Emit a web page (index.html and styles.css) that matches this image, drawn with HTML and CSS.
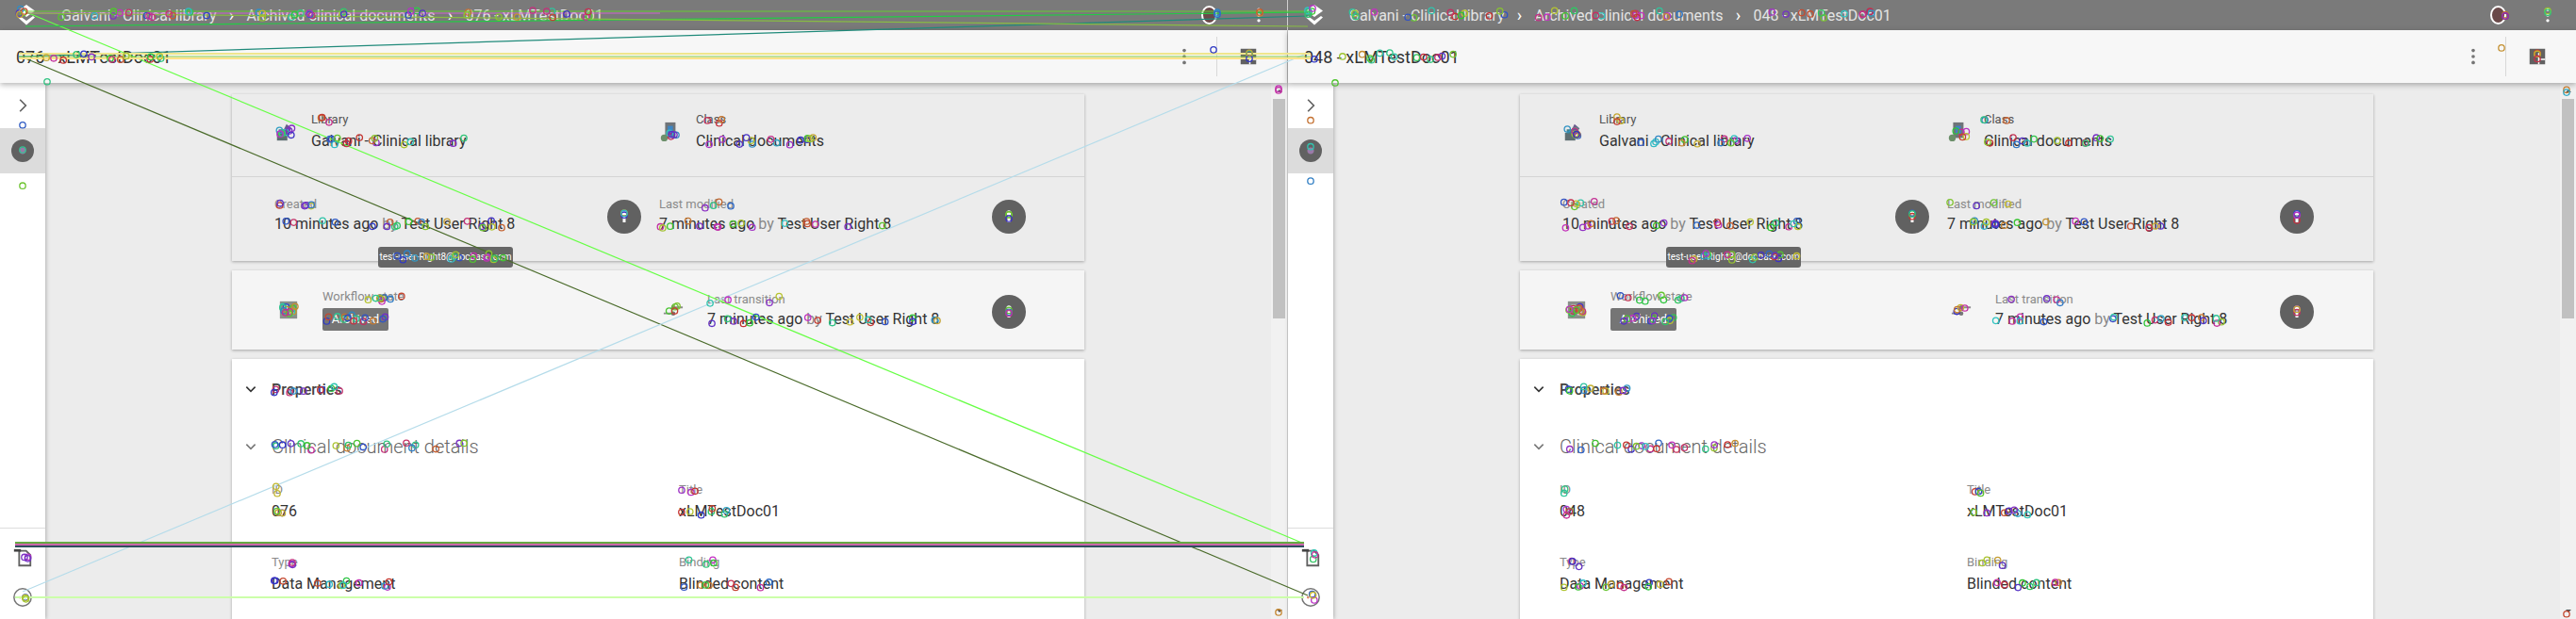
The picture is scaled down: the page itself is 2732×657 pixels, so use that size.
FILE: index.html
```html
<!DOCTYPE html>
<html lang="en">
<head>
  <meta charset="UTF-8" />
  <title>Galvani - Clinical library</title>
  <link rel="stylesheet" href="styles.css">
</head>
<body>
  <svg class="defs" width="0" height="0">
    <symbol id="i-logo" viewBox="0 0 24 24"><path d="M12 1l9 6.5-9 6.5-9-6.5z" fill="#fff"/><path d="M5 13l7 5 7-5 2 1.5-9 8-9-8z" fill="#fff"/></symbol>
    <symbol id="i-dots" viewBox="0 0 24 24"><circle cx="12" cy="5" r="2"/><circle cx="12" cy="12" r="2"/><circle cx="12" cy="19" r="2"/></symbol>
    <symbol id="i-table" viewBox="0 0 24 24"><path d="M1 1h22v22H1z" fill="#616161"/><path d="M13 7h2v8h8v2h-8v6h-2z" fill="#fff"/></symbol>
    <symbol id="i-person" viewBox="0 0 24 24"><circle cx="12" cy="6.5" r="3.5" fill="#fff"/><path d="M10 11h4v9h-4z" fill="#fff"/></symbol>
    <symbol id="i-library" viewBox="0 0 24 24"><path d="M3 13h12v9H3z" fill="#5d6d72"/><path d="M5 9h10v5H5z" fill="#3f7f8c"/><path d="M14 3l6 5-6 7-4-4z" fill="#6b5a8e"/></symbol>
    <symbol id="i-class" viewBox="0 0 24 24"><path d="M7 1h12v18H7z" fill="#6f7478"/><path d="M10 5h6v9h-6z" fill="#3d86c6"/><circle cx="6" cy="19" r="4" fill="#6c8f6a"/></symbol>
    <symbol id="i-state" viewBox="0 0 24 24"><path d="M2 2h20v20H2z" fill="#8a8f8a"/><path d="M6 6h5v5H6zM13 13h5v5h-5z" fill="#d8d8d8"/></symbol>
    <symbol id="i-move" viewBox="0 0 24 24"><path d="M12 8h11v2H12zM1 15h11v2H1z" fill="#8c8c8c"/><circle cx="12" cy="9" r="2.5" fill="#777"/><circle cx="12" cy="16" r="2.5" fill="#777"/></symbol>
    <symbol id="i-doc" viewBox="0 0 24 24"><path d="M8 4h8l5 5v12H8z" fill="none" stroke="#616161" stroke-width="2"/><path d="M2 2h8v3H2z" fill="#444"/></symbol>
    <symbol id="i-help" viewBox="0 0 24 24"><circle cx="12" cy="12" r="10" fill="none" stroke="#757575" stroke-width="1.6"/><circle cx="9" cy="12" r="1.5" fill="#e08a6a"/><circle cx="15" cy="12" r="1.5" fill="#9ac46a"/></symbol>
    <symbol id="i-chev-r" viewBox="0 0 24 24"><path d="M8.6 4.5L16 12l-7.4 7.5" fill="none" stroke="#616161" stroke-width="2"/></symbol>
    <symbol id="i-chev-d" viewBox="0 0 24 24"><path d="M5 8.5l7 7 7-7" fill="none" stroke="currentColor" stroke-width="2.4"/></symbol>
  </svg>

  <div class="screen">
    <section class="pane">
      <div class="topbar">
        <svg class="logo"><use href="#i-logo"/></svg>
        <nav class="crumbs">
          <span>Galvani - Clinical library</span><i>&#x203A;</i>
          <span>Archived clinical documents</span><i>&#x203A;</i>
          <span>076 - xLMTestDoc01</span>
        </nav>
        <span class="avatar-top"></span>
        <svg class="top-dots"><use href="#i-dots"/></svg>
      </div>
      <div class="subbar">
        <h1>076 - xLMTestDoc01</h1>
        <svg class="sub-dots"><use href="#i-dots"/></svg>
        <span class="sub-sep"></span>
        <svg class="sub-table"><use href="#i-table"/></svg>
      </div>
      <div class="main">
        <aside class="rail">
          <div class="rail-btn"><svg class="rail-chev"><use href="#i-chev-r"/></svg></div>
          <div class="rail-btn active"><span class="info-dot"></span></div>
          <div class="rail-bottom">
            <svg class="rail-ico"><use href="#i-doc"/></svg>
            <svg class="rail-ico"><use href="#i-help"/></svg>
          </div>
        </aside>
        <div class="content">
          <div class="card meta">
            <div class="row row-top">
              <div class="cell"><svg class="ico"><use href="#i-library"/></svg><div><div class="lbl dark">Library</div><div class="val">Galvani - Clinical library</div></div></div>
              <div class="cell"><svg class="ico"><use href="#i-class"/></svg><div><div class="lbl dark">Class</div><div class="val">Clinical documents</div></div></div>
            </div>
            <div class="row row-dates">
              <div class="cell"><div class="grow"><div class="lbl">Created</div><div class="val tight">10 minutes ago <em>by</em> Test User Right 8</div></div><span class="user"><svg><use href="#i-person"/></svg></span></div>
              <div class="cell"><div class="grow"><div class="lbl">Last modified</div><div class="val tight">7 minutes ago <em>by</em> Test User Right 8</div></div><span class="user"><svg><use href="#i-person"/></svg></span></div>
            </div>
            <div class="tooltip">test-user-Right8@docbase.com</div>
          </div>
          <div class="card row row-flow">
            <div class="cell"><svg class="ico wide"><use href="#i-state"/></svg><div><div class="lbl">Workflow state</div><div class="chip">Archived</div></div></div>
            <div class="cell"><svg class="ico wide"><use href="#i-move"/></svg><div class="grow"><div class="lbl">Last transition</div><div class="val tight">7 minutes ago <em>by</em> Test User Right 8</div></div><span class="user"><svg><use href="#i-person"/></svg></span></div>
          </div>
          <div class="card props">
            <div class="prop-head"><svg class="chev"><use href="#i-chev-d"/></svg><h2>Properties</h2></div>
            <div class="prop-sub"><svg class="chev soft"><use href="#i-chev-d"/></svg><h3>Clinical document details</h3></div>
            <div class="fields">
              <div><div class="lbl">ID</div><div class="val big">076</div></div>
              <div><div class="lbl">Title</div><div class="val big">xLMTestDoc01</div></div>
              <div><div class="lbl">Type</div><div class="val big">Data Management</div></div>
              <div><div class="lbl">Binding</div><div class="val big">Blinded content</div></div>
            </div>
          </div>
        </div>
        <div class="scroll"><span class="arrow up"></span><span class="thumb"></span><span class="arrow down"></span></div>
      </div>
    </section>

    <section class="pane">
      <div class="topbar">
        <svg class="logo"><use href="#i-logo"/></svg>
        <nav class="crumbs">
          <span>Galvani - Clinical library</span><i>&#x203A;</i>
          <span>Archived clinical documents</span><i>&#x203A;</i>
          <span>048 - xLMTestDoc01</span>
        </nav>
        <span class="avatar-top"></span>
        <svg class="top-dots"><use href="#i-dots"/></svg>
      </div>
      <div class="subbar">
        <h1>048 - xLMTestDoc01</h1>
        <svg class="sub-dots"><use href="#i-dots"/></svg>
        <span class="sub-sep"></span>
        <svg class="sub-table"><use href="#i-table"/></svg>
      </div>
      <div class="main">
        <aside class="rail">
          <div class="rail-btn"><svg class="rail-chev"><use href="#i-chev-r"/></svg></div>
          <div class="rail-btn active"><span class="info-dot"></span></div>
          <div class="rail-bottom">
            <svg class="rail-ico"><use href="#i-doc"/></svg>
            <svg class="rail-ico"><use href="#i-help"/></svg>
          </div>
        </aside>
        <div class="content">
          <div class="card meta">
            <div class="row row-top">
              <div class="cell"><svg class="ico"><use href="#i-library"/></svg><div><div class="lbl dark">Library</div><div class="val">Galvani - Clinical library</div></div></div>
              <div class="cell"><svg class="ico"><use href="#i-class"/></svg><div><div class="lbl dark">Class</div><div class="val">Clinical documents</div></div></div>
            </div>
            <div class="row row-dates">
              <div class="cell"><div class="grow"><div class="lbl">Created</div><div class="val tight">10 minutes ago <em>by</em> Test User Right 8</div></div><span class="user"><svg><use href="#i-person"/></svg></span></div>
              <div class="cell"><div class="grow"><div class="lbl">Last modified</div><div class="val tight">7 minutes ago <em>by</em> Test User Right 8</div></div><span class="user"><svg><use href="#i-person"/></svg></span></div>
            </div>
            <div class="tooltip">test-user-Right8@docbase.com</div>
          </div>
          <div class="card row row-flow">
            <div class="cell"><svg class="ico wide"><use href="#i-state"/></svg><div><div class="lbl">Workflow state</div><div class="chip">Archived</div></div></div>
            <div class="cell"><svg class="ico wide"><use href="#i-move"/></svg><div class="grow"><div class="lbl">Last transition</div><div class="val tight">7 minutes ago <em>by</em> Test User Right 8</div></div><span class="user"><svg><use href="#i-person"/></svg></span></div>
          </div>
          <div class="card props">
            <div class="prop-head"><svg class="chev"><use href="#i-chev-d"/></svg><h2>Properties</h2></div>
            <div class="prop-sub"><svg class="chev soft"><use href="#i-chev-d"/></svg><h3>Clinical document details</h3></div>
            <div class="fields">
              <div><div class="lbl">ID</div><div class="val big">048</div></div>
              <div><div class="lbl">Title</div><div class="val big">xLMTestDoc01</div></div>
              <div><div class="lbl">Type</div><div class="val big">Data Management</div></div>
              <div><div class="lbl">Binding</div><div class="val big">Blinded content</div></div>
            </div>
          </div>
        </div>
        <div class="scroll"><span class="arrow up"></span><span class="thumb"></span><span class="arrow down"></span></div>
      </div>
    </section>

    <!-- match lines and keypoints drawn over both panes -->
    <svg class="matches" viewBox="0 0 2732 657" width="2732" height="657">
      <g class="lines">
        <path d="M28 13L1383 577" stroke="#66ff44"/>
        <path d="M27 62L1387 632" stroke="#4a6b2a"/>
        <path d="M24 628L1383 58" stroke="#b5dcea"/>
        <path d="M20 60L1387 17" stroke="#1f8a7a"/>
        <path d="M28 12H1387" stroke="#66cc33"/>
        <path d="M28 14H700" stroke="#cc66cc"/>
        <path d="M27 28L1387 13" stroke="#22cc44"/>
        <path d="M28 14L1387 28" stroke="#88bb44"/>
        <path class="thick" d="M20 57H1390" stroke="#f0e68c"/>
        <path class="thick" d="M20 62H1390" stroke="#ffe38a"/>
        <path d="M20 60H1390" stroke="#88cc44"/>
        <path class="thick" d="M16 576H1383" stroke="#66aa44"/>
        <path class="thick" d="M16 578H1383" stroke="#cc66aa"/>
        <path class="thick" d="M16 580H1383" stroke="#2f4f5f"/>
        <path class="thick" d="M16 634H1383" stroke="#ccffaa"/>
      </g>
      <g class="points"></g>
    </svg>
  </div>
  <script src="matches.js"></script>
</body>
</html>
```

FILE: styles.css
```css
html, body {
  margin: 0;
  height: 100%;
  overflow: hidden;
}

body {
  font-family: Roboto, "Liberation Sans", sans-serif;
  color: #333;
  background-color: #ececec;
}

.defs {
  position: absolute;
}

.screen {
  position: relative;
  display: flex;
  width: 2732px;
  height: 657px;
  overflow: hidden;
}

.pane {
  display: flex;
  flex-direction: column;
  width: 1366px;
  height: 657px;
  flex: none;
  box-sizing: border-box;
}

.pane:first-child {
  border-right: 1px solid #d0d0d0;
}

/* top bar */
.topbar {
  display: flex;
  align-items: center;
  flex: none;
  height: 32px;
  background-color: #7a7a7a;
}

.logo {
  width: 24px;
  height: 24px;
  margin-left: 16px;
  fill: #fff;
}

.crumbs {
  display: flex;
  align-items: center;
  flex: 1;
  margin-left: 25px;
  font-size: 16px;
  color: #e4e4e4;
}

.crumbs i {
  width: 32px;
  font-style: normal;
  font-size: 18px;
  color: #fff;
  text-align: center;
  line-height: 20px;
}

.avatar-top {
  width: 17px;
  height: 20px;
  border: 2px solid #fff;
  border-radius: 50%;
  background-color: #6a4a4a;
  box-sizing: border-box;
  margin-right: 34px;
}

.top-dots {
  width: 20px;
  height: 20px;
  fill: #fff;
  margin-right: 20px;
}

/* title bar */
.subbar {
  position: relative;
  z-index: 2;
  display: flex;
  align-items: center;
  flex: none;
  height: 56px;
  padding-left: 17px;
  background-color: #f7f7f7;
  box-shadow: 0 2px 6px rgba(0, 0, 0, .3);
}

.subbar h1 {
  flex: 1;
  margin: 0;
  font-size: 18px;
  font-weight: 400;
  color: #333;
}

.sub-dots {
  width: 22px;
  height: 22px;
  fill: #757575;
  margin-right: 23px;
}

.sub-sep {
  width: 1px;
  height: 42px;
  background-color: #d8d8d8;
  margin-right: 24px;
}

.sub-table {
  width: 18px;
  height: 18px;
  margin-right: 32px;
}

/* main area */
.main {
  display: flex;
  flex: 1;
  min-height: 0;
}

.rail {
  position: relative;
  z-index: 1;
  display: flex;
  flex-direction: column;
  flex: none;
  width: 48px;
  background-color: #fff;
  box-shadow: 1px 0 4px rgba(0, 0, 0, .25);
}

.rail-btn {
  display: flex;
  align-items: center;
  justify-content: center;
  flex: none;
  height: 48px;
}

.rail-btn.active {
  background-color: #dcdcdc;
}

.rail-chev {
  width: 20px;
  height: 20px;
}

.info-dot {
  width: 24px;
  height: 24px;
  border-radius: 50%;
  background: radial-gradient(circle, #9a7aa8 0 3px, #616161 4px);
}

.rail-bottom {
  display: flex;
  flex-direction: column;
  align-items: center;
  gap: 20px;
  margin-top: auto;
  height: 97px;
  padding-top: 20px;
  box-sizing: border-box;
  border-top: 1px solid #ddd;
}

.rail-ico {
  width: 22px;
  height: 22px;
}

.content {
  flex: 1;
  min-width: 0;
  padding: 12px 198px 0;
  background-color: #ececec;
  overflow: hidden;
}

.scroll {
  display: flex;
  flex-direction: column;
  align-items: center;
  flex: none;
  width: 17px;
  background-color: #f1f1f1;
}

.thumb {
  width: 13px;
  height: 233px;
  background-color: #c1c1c1;
}

.arrow {
  flex: none;
  width: 0;
  height: 0;
  border-left: 3px solid transparent;
  border-right: 3px solid transparent;
}

.arrow.up {
  margin: 7px 0 7px;
  border-bottom: 3px solid #505050;
}

.arrow.down {
  margin-top: auto;
  margin-bottom: 7px;
  border-top: 3px solid #505050;
}

/* cards */
.card {
  box-shadow: 0 1px 3px rgba(0, 0, 0, .3);
}

.meta {
  position: relative;
  background-color: #ececec;
}

.row {
  display: grid;
  grid-template-columns: 408px 389px;
  align-items: center;
  padding-left: 45px;
  box-sizing: border-box;
}

.row-top {
  height: 88px;
  padding-bottom: 8px;
  border-bottom: 1px solid #d4d4d4;
}

.row-dates {
  height: 89px;
  padding-bottom: 8px;
}

.row-flow {
  height: 84px;
  margin: 10px 0;
  background-color: #f5f5f5;
}

.cell {
  display: flex;
  align-items: center;
  width: 389px;
}

.grow {
  flex: 1;
}

.ico {
  flex: none;
  width: 22px;
  height: 22px;
  margin-right: 17px;
}

.ico.wide {
  width: 30px;
  margin-right: 21px;
}

.lbl {
  font-size: 13px;
  line-height: 16px;
  color: #8a8a8a;
}

.lbl.dark {
  color: #555;
}

.val {
  margin-top: 5px;
  font-size: 16px;
  line-height: 20px;
  color: #333;
}

.val.tight {
  margin-top: 3px;
}

.val.big {
  margin-top: 5px;
}

.val em {
  font-style: normal;
  color: #888;
}

.user {
  display: flex;
  align-items: center;
  justify-content: center;
  flex: none;
  width: 36px;
  height: 36px;
  margin-top: 3px;
  border-radius: 50%;
  background-color: #616161;
}

.user svg {
  width: 18px;
  height: 18px;
}

.chip {
  width: 70px;
  height: 24px;
  margin-top: 4px;
  border-radius: 2px;
  background-color: #757575;
  font-size: 13px;
  line-height: 24px;
  text-align: center;
  color: #fff;
}

.tooltip {
  position: absolute;
  left: 155px;
  top: 162px;
  z-index: 1;
  width: 143px;
  height: 22px;
  border-radius: 3px;
  background-color: #666;
  font-size: 10px;
  line-height: 22px;
  text-align: center;
  color: #fff;
  white-space: nowrap;
  overflow: hidden;
}

.props {
  height: 300px;
  padding-top: 20px;
  box-sizing: border-box;
  background-color: #fff;
}

.prop-head, .prop-sub {
  display: flex;
  align-items: center;
  padding-left: 12px;
}

.prop-head {
  height: 24px;
}

.prop-sub {
  height: 24px;
  margin-top: 37px;
}

.chev {
  width: 16px;
  height: 16px;
  margin-right: 14px;
  color: #333;
}

.chev.soft {
  color: #777;
}

.prop-head h2 {
  margin: 0;
  font-size: 16px;
  font-weight: 500;
  color: #444;
}

.prop-sub h3 {
  margin: 0;
  font-size: 20px;
  font-weight: 300;
  color: #666;
}

.fields {
  display: grid;
  grid-template-columns: 432px 1fr;
  row-gap: 36px;
  padding: 26px 0 0 42px;
}

/* overlay */
.matches {
  position: absolute;
  left: 0;
  top: 0;
  z-index: 5;
  pointer-events: none;
}

.lines path {
  fill: none;
  stroke-width: 1.2;
}

.lines .thick {
  stroke-width: 2;
}

.points circle {
  fill: none;
  stroke-width: 1.3;
}
```

FILE: matches.js
```js
// keypoint markers, scattered along the text and icons of each pane
const bands = [
  // x1, x2, y, how many
  [65, 232, 15, 14], [263, 460, 15, 16], [495, 638, 15, 12],
  [20, 28, 12, 5], [17, 178, 60, 14],
  [296, 310, 140, 8], [340, 355, 128, 3], [330, 493, 150, 14],
  [705, 720, 142, 5], [738, 766, 128, 3], [738, 873, 150, 14],
  [292, 332, 217, 6], [292, 545, 238, 20],
  [700, 778, 217, 4], [700, 943, 238, 16],
  [405, 542, 273, 18],
  [298, 313, 329, 12], [345, 430, 316, 9], [345, 410, 338, 14],
  [708, 720, 328, 4], [750, 830, 318, 4], [750, 995, 340, 18],
  [662, 662, 230, 3], [1070, 1070, 230, 3], [1070, 1070, 332, 3],
  [290, 362, 413, 10], [290, 505, 474, 20],
  [292, 296, 520, 2], [290, 300, 543, 4],
  [720, 740, 521, 3], [722, 785, 543, 7],
  [300, 312, 598, 3], [290, 415, 620, 12],
  [722, 762, 598, 4], [722, 825, 620, 8],
  [1291, 1291, 16, 3], [1336, 1336, 15, 2], [1287, 1287, 51, 1], [1325, 1325, 60, 4],
  [24, 24, 130, 1], [24, 24, 159, 1], [24, 24, 196, 1], [50, 50, 90, 1],
  [24, 30, 590, 3], [24, 28, 634, 3], [1356, 1356, 97, 2], [1356, 1356, 648, 1]
];

const group = document.querySelector('.points');
let seed = 7;
function rand() {
  seed = (seed * 16807) % 2147483647;
  return seed / 2147483647;
}

[0, 1366].forEach(offset => {
  bands.forEach(([x1, x2, y, count]) => {
    for (let i = 0; i < count; i++) {
      const dot = document.createElementNS('http://www.w3.org/2000/svg', 'circle');
      dot.setAttribute('cx', offset + x1 + (x2 - x1) * rand());
      dot.setAttribute('cy', y + (rand() - 0.5) * 8);
      dot.setAttribute('r', 3.2);
      dot.setAttribute('stroke', `hsl(${Math.floor(rand() * 360)}, 60%, 48%)`);
      group.appendChild(dot);
    }
  });
});
```
